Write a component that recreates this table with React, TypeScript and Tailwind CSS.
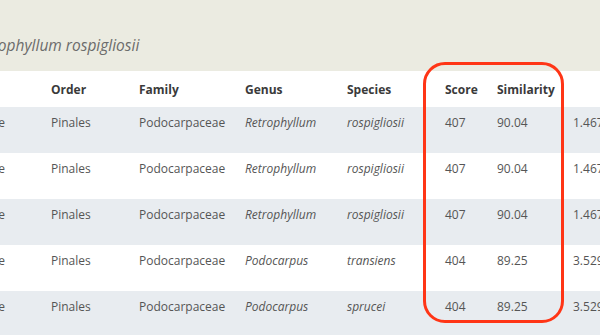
const rows = [
  { genus: 'Retrophyllum', species: 'rospigliosii', score: '407', sim: '90.04', ev: '1.467e-111' },
  { genus: 'Retrophyllum', species: 'rospigliosii', score: '407', sim: '90.04', ev: '1.467e-111' },
  { genus: 'Retrophyllum', species: 'rospigliosii', score: '407', sim: '90.04', ev: '1.467e-111' },
  { genus: 'Podocarpus', species: 'transiens', score: '404', sim: '89.25', ev: '3.529e-110' },
  { genus: 'Podocarpus', species: 'sprucei', score: '404', sim: '89.25', ev: '3.529e-110' },
];

export default function App() {
  return (
    <div className="relative w-[600px] h-[335px] overflow-hidden bg-white font-['Open_Sans',sans-serif]">
      {/* Page heading band */}
      <div className="h-[71px] bg-[#ebebe1] pt-[33px]">
        <div className="-ml-[30px] whitespace-nowrap text-[15.5px] italic text-[#6b6b6b] leading-[24px]">
          Retrophyllum rospigliosii
        </div>
      </div>

      {/* Results table */}
      <div className="text-[12px] leading-[18px] whitespace-nowrap">
        <div className="flex h-[36px] pt-[10px] font-bold text-[#3a3a3a]">
          <div className="w-[51px] shrink-0" />
          <div className="w-[88px] shrink-0">Order</div>
          <div className="w-[106px] shrink-0">Family</div>
          <div className="w-[102px] shrink-0">Genus</div>
          <div className="w-[98px] shrink-0">Species</div>
          <div className="w-[52px] shrink-0">Score</div>
          <div className="w-[76px] shrink-0">Similarity</div>
          <div className="shrink-0" />
        </div>
        {rows.map((r, i) => (
          <div
            key={i}
            className={`flex h-[46px] pt-[7px] text-[#555555] ${i % 2 === 0 ? 'bg-[#e8ecf0]' : 'bg-white'}`}
          >
            <div className="w-[51px] shrink-0 flex justify-end pr-[46px]">
              <span>Viridiplantae</span>
            </div>
            <div className="w-[88px] shrink-0">Pinales</div>
            <div className="w-[106px] shrink-0">Podocarpaceae</div>
            <div className="w-[102px] shrink-0 italic">{r.genus}</div>
            <div className="w-[98px] shrink-0 italic">{r.species}</div>
            <div className="w-[52px] shrink-0">{r.score}</div>
            <div className="w-[76px] shrink-0">{r.sim}</div>
            <div className="shrink-0">{r.ev}</div>
          </div>
        ))}
      </div>

      {/* Highlight annotation */}
      <div className="absolute left-[423px] top-[62px] w-[141px] h-[261px] rounded-[22px] border-[3px] border-[#ff3516]" />
    </div>
  );
}
